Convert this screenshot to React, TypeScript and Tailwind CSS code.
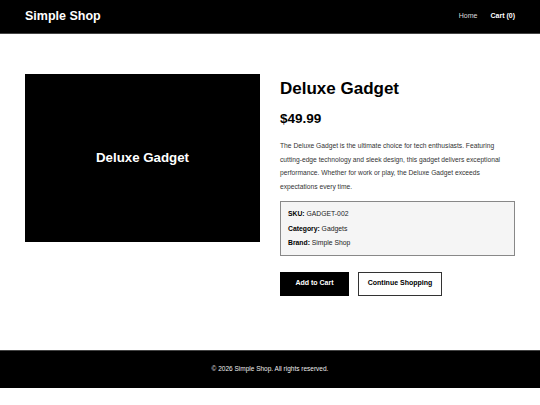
export default function App() {
  return (
    <div className="min-h-[405px] bg-white font-['Liberation_Sans',Arial,sans-serif] text-black">
      <header className="flex h-[34px] items-center justify-between border-b border-[#444] bg-black px-[25px]">
        <span className="text-[12.5px] font-bold text-white">Simple Shop</span>
        <nav className="flex items-center gap-[13px] text-[7px]">
          <span className="text-[#ddd]">Home</span>
          <span className="font-bold text-white">Cart (0)</span>
        </nav>
      </header>

      <main className="grid grid-cols-2 gap-[20px] px-[25px] pt-[40px] pb-[54px]">
        <div className="flex h-[168px] items-center justify-center bg-black">
          <span className="text-[13.3px] font-bold text-white">Deluxe Gadget</span>
        </div>

        <div className="flex flex-col">
          <h1 className="mt-[4px] text-[17px] leading-[22px] font-bold">Deluxe Gadget</h1>
          <div className="mt-[10px] text-[13.5px] leading-[18px] font-bold">$49.99</div>
          <p className="mt-[11px] text-[6.7px] leading-[13.5px] text-[#333]">
            The Deluxe Gadget is the ultimate choice for tech enthusiasts. Featuring cutting-edge technology
            and sleek design, this gadget delivers exceptional performance. Whether for work or play, the
            Deluxe Gadget exceeds expectations every time.
          </p>
          <div className="mt-[8px] flex flex-col gap-[7px] border border-[#888] bg-[#f5f5f5] px-[7px] py-[8px] text-[6.8px] leading-[7.5px] text-[#222]">
            <div><span className="font-bold text-black">SKU:</span> GADGET-002</div>
            <div><span className="font-bold text-black">Category:</span> Gadgets</div>
            <div><span className="font-bold text-black">Brand:</span> Simple Shop</div>
          </div>
          <div className="mt-[16px] flex gap-[9px]">
            <button className="h-[24px] w-[69px] bg-black text-[7px] font-bold text-white">Add to Cart</button>
            <button className="h-[24px] w-[84px] border border-[#333] bg-white text-[7px] font-bold text-black">
              Continue Shopping
            </button>
          </div>
        </div>
      </main>

      <footer className="flex h-[38px] items-center justify-center border-t border-[#444] bg-black text-[6.5px] text-[#eee]">
        © 2026 Simple Shop. All rights reserved.
      </footer>
    </div>
  )
}
